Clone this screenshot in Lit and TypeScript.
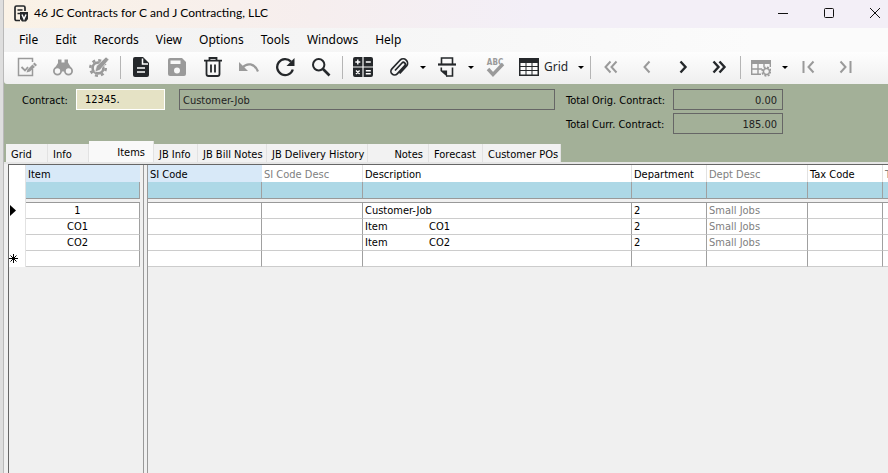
import { LitElement, html, css, svg, nothing } from "lit";
import { customElement } from "lit/decorators.js";
import { classMap } from "lit/directives/class-map.js";

const icons: Record<string, unknown> = {
  edit: svg`<path d="M15.500 12V18.500H1.500V1.500H15.500V5" fill="none" stroke="currentColor" stroke-width="1.500"/><path d="M4.500 10l3.500 3.500 3-3.500" fill="none" stroke="currentColor" stroke-width="1.800"/><path d="M10.500 12.500l7-7 2.500 2.500-7 6.500-3.500 1z" fill="currentColor"/><path d="M15.500 7l3 3" stroke="#f8f8f8"/>`,
  find: svg`<path d="M5 2.500h3.500v3h3v-3H15v3l3.500 6v3h-17v-3L5 6z" fill="currentColor"/><circle cx="4.500" cy="14" r="3.600" fill="#f6f6f6" stroke="currentColor" stroke-width="1.800"/><circle cx="15.500" cy="14" r="3.600" fill="#f6f6f6" stroke="currentColor" stroke-width="1.800"/>`,
  gear: svg`<circle cx="9" cy="11" r="7.700" fill="none" stroke="currentColor" stroke-width="2.600" stroke-dasharray="3 3.048"/><circle cx="9" cy="11" r="5.400" fill="none" stroke="currentColor" stroke-width="2.600"/><path d="M6 15l1.500-6L17 0 20 2.500l-9 10.500z" fill="currentColor" stroke="#f8f8f8" stroke-width=".6"/>`,
  doc: svg`<path d="M4 0h8l6 6v12a2 2 0 0 1-2 2H4a2 2 0 0 1-2-2V2a2 2 0 0 1 2-2z" fill="currentColor"/><path d="M11.500 1.500V7H17M6 11h8M6 15h8" fill="none" stroke="#fff" stroke-width="1.500"/>`,
  save: svg`<path d="M3 1h12l4 4v12a2 2 0 0 1-2 2H3a2 2 0 0 1-2-2V3a2 2 0 0 1 2-2z" fill="currentColor"/><path d="M3.500 3.500h10V7h-10z" fill="#f8f8f8"/><circle cx="10" cy="13.500" r="3" fill="#f8f8f8"/>`,
  trash: svg`<path d="M1 3.700h18M6.500 3.500V1h7v2.500M3.500 4v13a2 2 0 0 0 2 2h9a2 2 0 0 0 2-2V4M8 7.500v8M12 7.500v8" fill="none" stroke="currentColor" stroke-width="1.800"/>`,
  undo: svg`<path d="M0 5v9h9z" fill="currentColor"/><path d="M3.500 10.500C8 5.500 15.500 6 19 14.500" fill="none" stroke="currentColor" stroke-width="2.200"/>`,
  refresh: svg`<path d="M16 4.600A8 8 0 1 0 17.800 12.500" fill="none" stroke="currentColor" stroke-width="2.300"/><path d="M19.500 1v8h-8z" fill="currentColor"/>`,
  search: svg`<circle cx="7.700" cy="7.700" r="5.700" fill="none" stroke="currentColor" stroke-width="2"/><path d="M12 12l6.500 6.500" stroke="currentColor" stroke-width="2.600"/>`,
  calc: svg`<path d="M2 0h7.400v9.400H0V2a2 2 0 0 1 2-2zM10.600 0H18a2 2 0 0 1 2 2v7.400h-9.400zM0 10.600h9.400V20H2a2 2 0 0 1-2-2zM10.600 10.600H20V18a2 2 0 0 1-2 2h-7.400z" fill="currentColor"/><path d="M4.800 2.500v5M2.300 5h5M12.800 5h5M3 13.500l3.600 3.600M6.600 13.500L3 17.100M12.800 13.800h5M12.800 16.800h5" stroke="#fff" stroke-width="1.400"/>`,
  clip: svg`<path d="M6 13.500l7-7.500a1.900 1.900 0 0 1 2.800 2.600l-7.600 8.200a3.600 3.600 0 0 1-5.300-5L11.200 3a4.400 4.400 0 0 1 6.400 6l-6.900 7.500" fill="none" stroke="currentColor" stroke-width="1.700"/>`,
  print: svg`<path d="M4.500 7V1h11v6M15.500 10.500v8.500H9" fill="none" stroke="currentColor" stroke-width="1.600"/><path d="M1 7.500h18" stroke="currentColor" stroke-width="2.200"/><path d="M3.500 10.500h1.600v3h5v6.300L3.500 14z" fill="currentColor"/>`,
  check: svg`<text x="10" y="7.500" text-anchor="middle" class="abc">ABC</text><path d="M3 12l5 5.500 10-10.500" fill="none" stroke="currentColor" stroke-width="3.400"/>`,
  grid: svg`<path d="M0 1h20v18H0z" fill="currentColor"/><path d="M1.500 6h5v3h-5zM7.500 6h5v3h-5zM13.500 6h5v3h-5zM1.500 10h5v3h-5zM7.500 10h5v3h-5zM13.500 10h5v3h-5zM1.500 14h5v3.500h-5zM7.500 14h5v3.500h-5zM13.500 14h5v3.500h-5z" fill="#fbfbfb"/>`,
  first: svg`<path d="M9.500 4.500L4.500 10l5 5.500M15.500 4.500L10.500 10l5 5.500" fill="none" stroke="currentColor" stroke-width="2"/>`,
  prev: svg`<path d="M12.500 4.500L7.500 10l5 5.500" fill="none" stroke="currentColor" stroke-width="2"/>`,
  next: svg`<path d="M7.500 4.500l5 5.500-5 5.500" fill="none" stroke="currentColor" stroke-width="2.400"/>`,
  last: svg`<path d="M4.500 4.500l5 5.500-5 5.500M10.500 4.500l5 5.500-5 5.500" fill="none" stroke="currentColor" stroke-width="2.400"/>`,
  tablegear: svg`<path d="M0 3h20v4H0z" fill="currentColor"/><path d="M.7 7v10.300H10M.7 12H11M7 7v10.300M13 7v3M19.300 7v3" fill="none" stroke="currentColor" stroke-width="1.400"/><circle cx="15.500" cy="14.500" r="4.400" fill="none" stroke="currentColor" stroke-width="1.500" stroke-dasharray="2 1.460"/><circle cx="15.500" cy="14.500" r="3" fill="#f5f5f5" stroke="currentColor" stroke-width="1.400"/>`,
  start: svg`<path d="M4.500 4v12M14.500 4.500L9.500 10l5 5.500" fill="none" stroke="currentColor" stroke-width="2"/>`,
  end: svg`<path d="M15.500 4v12M5.500 4.500l5 5.500-5 5.500" fill="none" stroke="currentColor" stroke-width="2"/>`,
};

interface Tool { icon?: string; label?: string; off?: boolean; drop?: boolean; text?: string; }

const tools: Tool[] = [
  { icon: "edit", label: "Edit record", off: true },
  { icon: "find", label: "Find", off: true },
  { icon: "gear", label: "Customize", off: true },
  {},
  { icon: "doc", label: "New" },
  { icon: "save", label: "Save", off: true },
  { icon: "trash", label: "Delete" },
  { icon: "undo", label: "Undo", off: true },
  { icon: "refresh", label: "Refresh" },
  { icon: "search", label: "Search" },
  {},
  { icon: "calc", label: "Calculator" },
  { icon: "clip", label: "Attachments", drop: true },
  { icon: "print", label: "Print", drop: true },
  { icon: "check", label: "Spelling", off: true },
  { icon: "grid", label: "Grid", text: "Grid", drop: true },
  {},
  { icon: "first", label: "First", off: true },
  { icon: "prev", label: "Previous", off: true },
  { icon: "next", label: "Next" },
  { icon: "last", label: "Last" },
  {},
  { icon: "tablegear", label: "Grid settings", off: true, drop: true },
  { icon: "start", label: "Go to start", off: true },
  { icon: "end", label: "Go to end", off: true },
];

const menus = ["File", "Edit", "Records", "View", "Options", "Tools", "Windows", "Help"];

const tabs = [
  { name: "Grid", width: 42 },
  { name: "Info", width: 41 },
  { name: "Items", width: 65, active: true, end: true },
  { name: "JB Info", width: 44 },
  { name: "JB Bill Notes", width: 69 },
  { name: "JB Delivery History", width: 101 },
  { name: "Notes", width: 61, end: true },
  { name: "Forecast", width: 54 },
  { name: "Customer POs", width: 78 },
];

const columns = [
  { name: "SI Code", width: 114, key: true },
  { name: "SI Code Desc", width: 101, dim: true },
  { name: "Description", width: 269 },
  { name: "Department", width: 75 },
  { name: "Dept Desc", width: 101, dim: true },
  { name: "Tax Code", width: 75 },
  { name: "T", width: 101, dim: true },
];

const rows = [
  { item: "1", desc: ["Customer-Job"], dept: "2", deptDesc: "Small Jobs" },
  { item: "CO1", desc: ["Item", "CO1"], dept: "2", deptDesc: "Small Jobs" },
  { item: "CO2", desc: ["Item", "CO2"], dept: "2", deptDesc: "Small Jobs" },
  { item: "", desc: [""], dept: "", deptDesc: "" },
];

@customElement("app-root")
export class AppRoot extends LitElement {
  static styles = css`
    :host {
      display: flex;
      flex-direction: column;
      box-sizing: border-box;
      min-height: 100vh;
      padding-left: 4px;
      overflow: hidden;
      color: #000;
      background: linear-gradient(90deg, #dedede 3px, #b9b9b9 3px, #b9b9b9 4px, #f0f0f0 4px);
      font: 11px/16px "DejaVu Sans Condensed", "DejaVu Sans", sans-serif;
    }
    * { box-sizing: border-box; }
    button, input { margin: 0; padding: 0; border: 0; font: inherit; color: inherit; background: none; border-radius: 0; }
    .title {
      display: flex;
      align-items: center;
      height: 28px;
      padding: 0 0 2px 10px;
      background: linear-gradient(90deg, #faf2e6, #f6eeee 35%, #f3eff7 60%);
      font: 12px/16px Lato, "Noto Sans", sans-serif;
    }
    .title h1 { flex: 1; margin: 0 0 0 5px; font: inherit; }
    .title button { width: 46px; height: 26px; display: grid; place-items: center; }
    .title button:last-child { margin-right: -10px; }
    .logo { width: 15px; height: 17px; }
    .menu {
      display: flex;
      gap: 17px;
      height: 24px;
      padding: 0 15px;
      background: linear-gradient(90deg, #f1f1f1, #fbfbfb 85%);
      font: 12px/24px "Noto Sans", "Open Sans", sans-serif;
    }
    .tools {
      display: flex;
      height: 32px;
      padding: 0 0 2px 5px;
      background: linear-gradient(#fefefe, #efefef);
      border-radius: 0 0 0 3px;
      color: #25282b;
    }
    .tool { flex: none; display: flex; align-items: center; justify-content: center; gap: 5px; width: 36px; }
    .tool.wide { width: 62px; justify-content: flex-start; padding-left: 6px; font: 12px/16px "Noto Sans", "Open Sans", sans-serif; color: #25282b; }
    .tool.off { color: #9a9a9a; }
    .icon { flex: none; width: 20px; height: 20px; }
    .abc { font: bold 8px "DejaVu Sans Condensed", sans-serif; fill: currentColor; }
    .drop { flex: none; display: grid; place-items: center; width: 12px; }
    .drop::after { content: ""; border: 3px solid transparent; border-top-color: #000; border-bottom: 0; }
    .sep { flex: none; width: 1px; height: 23px; margin: 4px 2px 0 3px; background: #b5b5b5; }
    .work { background: #a3b098; }
    .form { display: flex; height: 57px; padding: 5px 18px 0; }
    .form label { line-height: 24px; }
    .contract { display: flex; align-items: flex-start; }
    .contract label { width: 54px; }
    .form input { height: 21px; }
    .form .code { width: 89px; padding: 0 8px; background: #e5e2c5; border: 1px solid #fff; }
    .form .name { width: 376px; margin-left: 14px; padding: 2px 3px 0; border: 1px solid #666; color: #222; }
    .totals { display: grid; grid-template-columns: 107px 110px; grid-auto-rows: 21px; row-gap: 3px; margin-left: 11px; }
    .totals input { width: 110px; padding: 2px 5px 0; text-align: right; border: 1px solid #666; color: #222; }
    .tabs { display: flex; align-items: flex-end; height: 21px; padding-left: 2px; }
    .tab { flex: none; height: 18px; padding: 0 0 0 5px; background: #f2f2f2; border-right: 1px solid #e2e2e2; line-height: 22px; text-align: left; white-space: nowrap; }
    .tab.end { text-align: right; padding-right: 5px; }
    .tab.active { height: 21px; padding: 1px 8px 0 5px; background: #f9f9f9; }
    .sheet { flex: 1; display: flex; margin-left: 4px; border: solid #666; border-width: 1px 0 0 1px; overflow: hidden; }
    .rule { height: 2px; background: #e6e6e6; }
    table { flex: none; table-layout: fixed; border-spacing: 0; align-self: flex-start; }
    .left { width: 131px; }
    .right { width: 836px; }
    .split { flex: none; width: 5px; margin-left: 3px; border: solid #999; border-width: 0 1px; }
    th, td { height: 16px; padding: 0; overflow: hidden; white-space: nowrap; text-align: left; font-weight: normal; line-height: 15px; }
    td { background: #fff; border: solid #a0a0a0; border-width: 0 1px 1px 0; border-bottom-color: #ccc; padding: 0 2px; }
    th { height: 17px; padding: 2px 2px 0; line-height: 15px; background: #fff; border-right: 1px solid #e2e2e2; }
    th.key { background: #d8e9f8; border-color: #d8e9f8; }
    .filter td { height: 17px; background: #add8e6; border-bottom-color: #999; }
    .gap td { height: 4px; line-height: 0; background: #f0f0f0; border-right: 0; border-bottom-color: #999; }
    td.dim, th.dim { color: #808080; }
    td.item { text-align: center; padding-right: 12px; }
    table .mark { background: #fff; border: 0 solid #e2e2e2; border-right-width: 1px; padding: 0; }
    .mark svg { display: block; width: 10px; height: 12px; }
    .part { display: inline-block; min-width: 64px; }
  `;

  private tool(t: Tool) {
    if (!t.icon) return html`<span class="sep"></span>`;
    return html`<button class=${classMap({ tool: true, off: !!t.off, wide: !!t.text })} aria-label=${t.label!}>
        <svg class="icon" viewBox="0 0 20 20">${icons[t.icon]}</svg>${t.text ?? nothing}</button>
      ${t.drop ? html`<button class="drop" aria-label="${t.label} options"></button>` : nothing}`;
  }

  private marker(i: number) {
    if (i === 0) return html`<svg viewBox="0 0 10 12"><path d="M1 0v11l6-5.500z"/></svg>`;
    if (i === 3) return html`<svg viewBox="0 0 10 12"><path d="M4.500 1v9M0 5.500h9M1.500 2.500l6 6M7.500 2.500l-6 6" stroke="#000"/></svg>`;
    return nothing;
  }

  render() {
    return html`
      <header class="title">
        <svg class="logo" viewBox="0 0 15 17"><path d="M6 15.500H2.500a1.500 1.500 0 0 1-1.500-1.500V2.500A1.500 1.500 0 0 1 2.500 1h7A1.500 1.500 0 0 1 11 2.500V6" fill="none" stroke="#25282b" stroke-width="1.700"/><path d="M3.500 5h5M3.500 8.500H6" stroke="#25282b" stroke-width="1.300"/><path d="M6 7h8v7l-2 2.500H8L6 14z" fill="#25282b"/><path d="M8 9.500l2 4.500 2-4.500" fill="none" stroke="#fff" stroke-width="1.400"/></svg>
        <h1>46 JC Contracts for C and J Contracting, LLC</h1>
        <button aria-label="Minimize"><svg width="10" height="10"><path d="M0 5.500h10" stroke="#111"/></svg></button>
        <button aria-label="Maximize"><svg width="10" height="10"><rect x=".5" y=".5" width="9" height="9" rx="1" fill="none" stroke="#111"/></svg></button>
        <button aria-label="Close"><svg width="10" height="10"><path d="M0 0l10 10M10 0L0 10" stroke="#111"/></svg></button>
      </header>
      <nav class="menu">${menus.map((m) => html`<button>${m}</button>`)}</nav>
      <div class="work">
        <div class="tools" role="toolbar">${tools.map((t) => this.tool(t))}</div>
        <div class="form">
          <div class="contract">
            <label for="contract">Contract:</label>
            <input id="contract" class="code" value="12345." />
            <input class="name" aria-label="Contract name" value="Customer-Job" readonly />
          </div>
          <div class="totals">
            <label for="orig">Total Orig. Contract:</label><input id="orig" value="0.00" readonly />
            <label for="curr">Total Curr. Contract:</label><input id="curr" value="185.00" readonly />
          </div>
        </div>
        <div class="tabs" role="tablist">
          ${tabs.map((t) => html`<button role="tab" aria-selected=${!!t.active} class=${classMap({ tab: true, active: !!t.active, end: !!t.end })} style="width:${t.width}px">${t.name}</button>`)}
        </div>
      </div>
      <div class="rule"></div>
      <main class="sheet">
        <table class="left">
          <colgroup><col style="width:17px" /><col style="width:114px" /></colgroup>
          <thead><tr><th class="mark"></th><th class="key">Item</th></tr></thead>
          <tbody>
            <tr class="filter"><td class="mark"></td><td></td></tr>
            <tr class="gap"><td class="mark"></td><td></td></tr>
            ${rows.map((r, i) => html`<tr><td class="mark">${this.marker(i)}</td><td class="item">${r.item}</td></tr>`)}
          </tbody>
        </table>
        <div class="split"></div>
        <table class="right">
          <colgroup>${columns.map((c) => html`<col style="width:${c.width}px" />`)}</colgroup>
          <thead><tr>${columns.map((c) => html`<th class=${classMap({ key: !!c.key, dim: !!c.dim })}>${c.name}</th>`)}</tr></thead>
          <tbody>
            <tr class="filter">${columns.map(() => html`<td></td>`)}</tr>
            <tr class="gap"><td colspan="7"></td></tr>
            ${rows.map((r) => html`<tr>
              <td></td><td></td>
              <td>${r.desc.map((d) => html`<span class="part">${d}</span>`)}</td>
              <td>${r.dept}</td><td class="dim">${r.deptDesc}</td><td></td><td></td>
            </tr>`)}
          </tbody>
        </table>
      </main>
    `;
  }
}
